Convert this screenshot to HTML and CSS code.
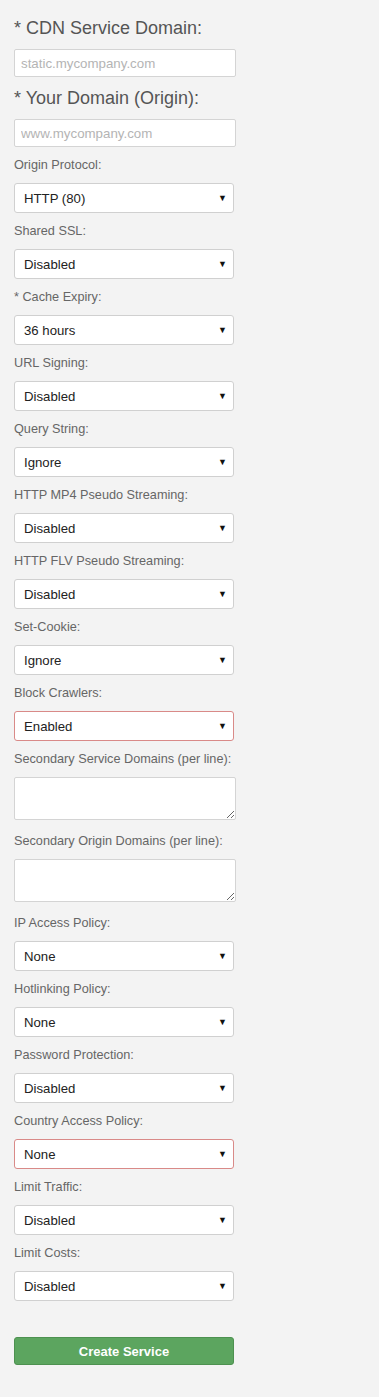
FILE: index.html
```html
<!DOCTYPE html>
<html>
<head>
<meta charset="utf-8">
<link rel="stylesheet" href="styles.css">
</head>
<body>
<form class="form">
  <h3 class="heading">* CDN Service Domain:</h3>
  <input class="text" type="text" placeholder="static.mycompany.com">
  <h3 class="heading">* Your Domain (Origin):</h3>
  <input class="text" type="text" placeholder="www.mycompany.com">

  <label class="label">Origin Protocol:</label>
  <div class="sel"><select><option>HTTP (80)</option></select><span class="arrow">▼</span></div>

  <label class="label">Shared SSL:</label>
  <div class="sel"><select><option>Disabled</option></select><span class="arrow">▼</span></div>

  <label class="label">* Cache Expiry:</label>
  <div class="sel"><select><option>36 hours</option></select><span class="arrow">▼</span></div>

  <label class="label">URL Signing:</label>
  <div class="sel"><select><option>Disabled</option></select><span class="arrow">▼</span></div>

  <label class="label">Query String:</label>
  <div class="sel"><select><option>Ignore</option></select><span class="arrow">▼</span></div>

  <label class="label">HTTP MP4 Pseudo Streaming:</label>
  <div class="sel"><select><option>Disabled</option></select><span class="arrow">▼</span></div>

  <label class="label">HTTP FLV Pseudo Streaming:</label>
  <div class="sel"><select><option>Disabled</option></select><span class="arrow">▼</span></div>

  <label class="label">Set-Cookie:</label>
  <div class="sel"><select><option>Ignore</option></select><span class="arrow">▼</span></div>

  <label class="label">Block Crawlers:</label>
  <div class="sel sel-warn"><select><option>Enabled</option></select><span class="arrow">▼</span></div>

  <label class="label">Secondary Service Domains (per line):</label>
  <textarea class="area"></textarea>

  <label class="label">Secondary Origin Domains (per line):</label>
  <textarea class="area"></textarea>

  <label class="label">IP Access Policy:</label>
  <div class="sel"><select><option>None</option></select><span class="arrow">▼</span></div>

  <label class="label">Hotlinking Policy:</label>
  <div class="sel"><select><option>None</option></select><span class="arrow">▼</span></div>

  <label class="label">Password Protection:</label>
  <div class="sel"><select><option>Disabled</option></select><span class="arrow">▼</span></div>

  <label class="label">Country Access Policy:</label>
  <div class="sel sel-warn"><select><option>None</option></select><span class="arrow">▼</span></div>

  <label class="label">Limit Traffic:</label>
  <div class="sel"><select><option>Disabled</option></select><span class="arrow">▼</span></div>

  <label class="label">Limit Costs:</label>
  <div class="sel"><select><option>Disabled</option></select><span class="arrow">▼</span></div>

  <button class="btn" type="button">Create Service</button>
</form>
</body>
</html>
```

FILE: styles.css
```css
html, body {
  margin: 0;
  padding: 0;
  background: #f3f3f3;
}

body {
  font-family: "Liberation Sans", Arial, sans-serif;
  color: #555;
}

.form {
  display: flex;
  flex-direction: column;
  align-items: flex-start;
  padding: 16px 14px 32px 14px;
}

.heading {
  margin: 0 0 9px 0;
  height: 24px;
  line-height: 24px;
  font-size: 18px;
  font-weight: normal;
  color: #555;
}

.text {
  box-sizing: border-box;
  width: 222px;
  height: 28px;
  margin: 0 0 9px 0;
  padding: 0 6px;
  border: 1px solid #d4d4d4;
  border-radius: 2px;
  background: #fff;
  font-family: "Liberation Sans", Arial, sans-serif;
  font-size: 13.3px;
  color: #333;
  outline: none;
}

.text::placeholder {
  color: #b4b4b4;
}

.label {
  display: block;
  height: 18px;
  line-height: 18px;
  margin: 0 0 9px 0;
  font-size: 12.7px;
  color: #666;
}

.sel {
  position: relative;
  width: 220px;
  height: 30px;
  margin: 0 0 9px 0;
}

.sel select {
  -webkit-appearance: none;
  appearance: none;
  box-sizing: border-box;
  width: 100%;
  height: 30px;
  padding: 0 0 0 9px;
  border: 1px solid #d0d0d0;
  border-radius: 3px;
  background: #fff;
  font-family: "Liberation Sans", Arial, sans-serif;
  font-size: 13.2px;
  color: #222;
  outline: none;
}

.sel-warn select {
  border-color: #d98a88;
}

.arrow {
  position: absolute;
  right: 7px;
  top: 9px;
  font-size: 9px;
  line-height: 12px;
  color: #111;
  pointer-events: none;
}

.area {
  display: block;
  box-sizing: border-box;
  width: 222px;
  height: 43px;
  margin: 0 0 12px 0;
  padding: 4px 6px;
  border: 1px solid #d4d4d4;
  border-radius: 2px;
  background: #fff;
  outline: none;
  font-family: "Liberation Sans", Arial, sans-serif;
}

.btn {
  box-sizing: border-box;
  width: 220px;
  height: 28px;
  margin: 27px 0 0 0;
  border: 1px solid #4d9150;
  border-radius: 3px;
  background: #5ca55f;
  color: #fff;
  font-family: "Liberation Sans", Arial, sans-serif;
  font-size: 13px;
  font-weight: bold;
}
```
